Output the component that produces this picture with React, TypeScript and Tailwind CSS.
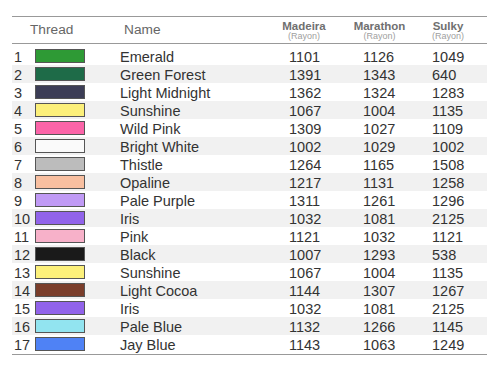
const threads = [
  { name: "Emerald", color: "#2e9a35", madeira: "1101", marathon: "1126", sulky: "1049" },
  { name: "Green Forest", color: "#1e6b48", madeira: "1391", marathon: "1343", sulky: "640" },
  { name: "Light Midnight", color: "#3c3d56", madeira: "1362", marathon: "1324", sulky: "1283" },
  { name: "Sunshine", color: "#fcf07a", madeira: "1067", marathon: "1004", sulky: "1135" },
  { name: "Wild Pink", color: "#fb64a8", madeira: "1309", marathon: "1027", sulky: "1109" },
  { name: "Bright White", color: "#fafafa", madeira: "1002", marathon: "1029", sulky: "1002" },
  { name: "Thistle", color: "#bcbcbc", madeira: "1264", marathon: "1165", sulky: "1508" },
  { name: "Opaline", color: "#f8bfa0", madeira: "1217", marathon: "1131", sulky: "1258" },
  { name: "Pale Purple", color: "#c09af5", madeira: "1311", marathon: "1261", sulky: "1296" },
  { name: "Iris", color: "#9163ea", madeira: "1032", marathon: "1081", sulky: "2125" },
  { name: "Pink", color: "#f7b1c9", madeira: "1121", marathon: "1032", sulky: "1121" },
  { name: "Black", color: "#1a1a1a", madeira: "1007", marathon: "1293", sulky: "538" },
  { name: "Sunshine", color: "#fcf07a", madeira: "1067", marathon: "1004", sulky: "1135" },
  { name: "Light Cocoa", color: "#7a3e2b", madeira: "1144", marathon: "1307", sulky: "1267" },
  { name: "Iris", color: "#9163ea", madeira: "1032", marathon: "1081", sulky: "2125" },
  { name: "Pale Blue", color: "#92e4f0", madeira: "1132", marathon: "1266", sulky: "1145" },
  { name: "Jay Blue", color: "#4f82f5", madeira: "1143", marathon: "1063", sulky: "1249" },
];

function BrandHeader({ brand, width }: { brand: string; width: string }) {
  return (
    <div className={`${width} flex flex-col items-center`}>
      <span className="text-[11.5px] font-bold leading-[12px] text-[#707070]">{brand}</span>
      <span className="text-[9px] leading-[9px] text-[#a0a0a0]">(Rayon)</span>
    </div>
  );
}

export default function App() {
  return (
    <div className="h-[366px] w-[500px] bg-white pt-[16px] font-['Liberation_Sans',Arial,sans-serif]">
      <div className="ml-[12px] w-[475px] border-b border-[#999]">
        <div className="flex h-[28px] items-center border-y border-[#999] text-[13.7px] text-[#666]">
          <div className="w-[112px] pl-[18px]">Thread</div>
          <div className="w-[140px]">Name</div>
          <BrandHeader brand="Madeira" width="w-[80px]" />
          <BrandHeader brand="Marathon" width="w-[71px]" />
          <BrandHeader brand="Sulky" width="w-[66px]" />
        </div>

        <div className="pb-px pt-[3px] text-[14.5px] text-[#333]">
          {threads.map((t, i) => (
            <div
              key={i}
              className={`flex h-[18px] items-start leading-[18px] ${i % 2 === 1 ? "bg-[#f1f1f1]" : ""}`}
            >
              <div className="w-[23px] pl-[2px] pt-px">{i + 1}</div>
              <div className="w-[85px] pt-[2px]">
                <div
                  className="h-[14px] w-[50px] border border-[#555]"
                  style={{ backgroundColor: t.color }}
                />
              </div>
              <div className="w-[169px] pt-px">{t.name}</div>
              <div className="w-[74px] pt-px">{t.madeira}</div>
              <div className="w-[69px] pt-px">{t.marathon}</div>
              <div className="flex-1 pt-px">{t.sulky}</div>
            </div>
          ))}
        </div>
      </div>
    </div>
  );
}
